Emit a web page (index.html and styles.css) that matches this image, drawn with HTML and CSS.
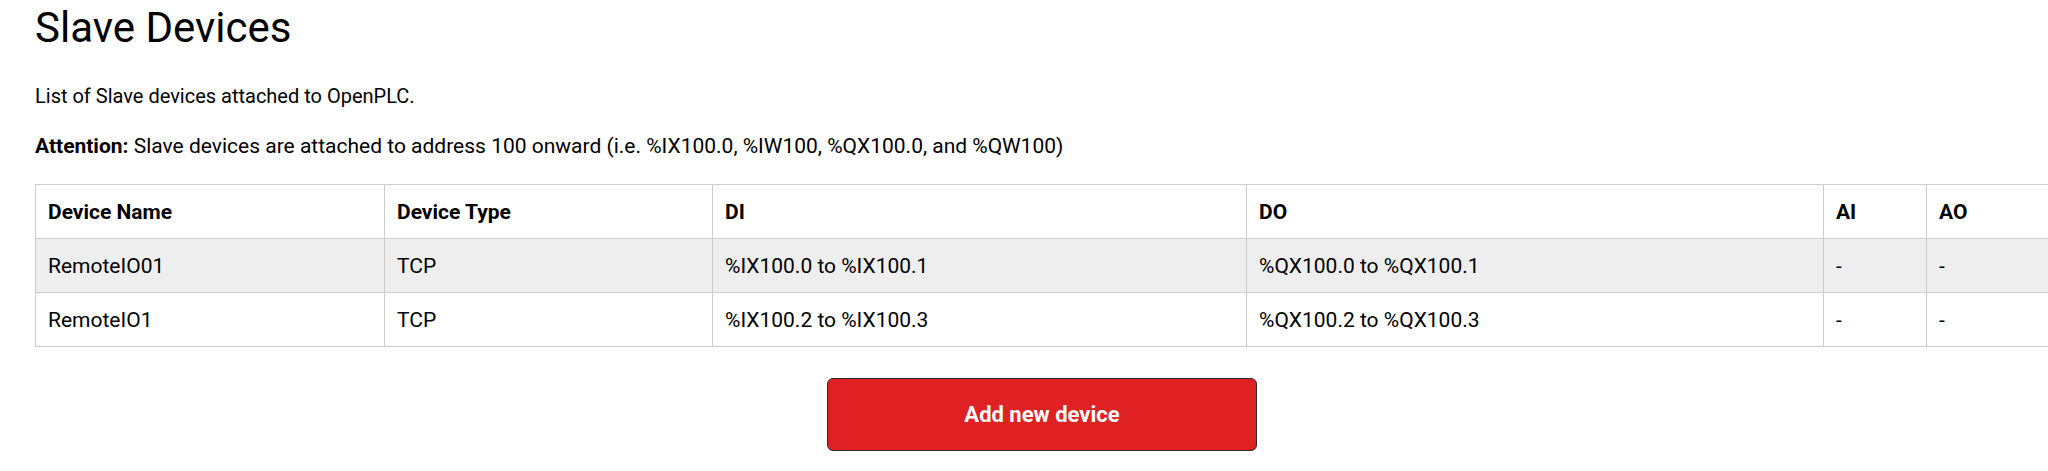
FILE: index.html
```html
<!DOCTYPE html>
<html lang="en">
<head>
<meta charset="utf-8">
<title>Slave Devices</title>
<link rel="stylesheet" href="styles.css">
</head>
<body>
<main class="content">
  <h1 class="title">Slave Devices</h1>
  <p class="lead">List of Slave devices attached to OpenPLC.</p>
  <p class="note"><strong>Attention:</strong> Slave devices are attached to address 100 onward (i.e. %IX100.0, %IW100, %QX100.0, and %QW100)</p>
  <table class="devices">
    <colgroup>
      <col class="c-name">
      <col class="c-type">
      <col class="c-di">
      <col class="c-do">
      <col class="c-ai">
      <col class="c-ao">
    </colgroup>
    <thead>
      <tr><th>Device Name</th><th>Device Type</th><th>DI</th><th>DO</th><th>AI</th><th>AO</th></tr>
    </thead>
    <tbody>
      <tr class="odd"><td>RemoteIO01</td><td>TCP</td><td>%IX100.0 to %IX100.1</td><td>%QX100.0 to %QX100.1</td><td>-</td><td>-</td></tr>
      <tr><td>RemoteIO1</td><td>TCP</td><td>%IX100.2 to %IX100.3</td><td>%QX100.2 to %QX100.3</td><td>-</td><td>-</td></tr>
    </tbody>
  </table>
  <div class="actions">
    <button class="btn-add" type="button">Add new device</button>
  </div>
</main>
</body>
</html>
```

FILE: styles.css
```css
html {
  overflow: hidden;
}
body {
  margin: 0;
  background: #fff;
  color: #000;
  font-family: Roboto, "Liberation Sans", Arial, sans-serif;
}
.content {
  width: 2014px;
  padding-left: 35px;
}
.title {
  margin: 3px 0 0;
  font-size: 42px;
  line-height: 50px;
  font-weight: 400;
}
.lead {
  margin: 30px 0 0;
  font-size: 20px;
  line-height: 26px;
}
.note {
  margin: 24px 0 0;
  font-size: 21px;
  line-height: 26px;
}
.devices {
  margin-top: 25px;
  width: 2014px;
  table-layout: fixed;
  border-collapse: collapse;
  font-size: 21px;
}
.c-name { width: 349px; }
.c-type { width: 328px; }
.c-di { width: 534px; }
.c-do { width: 577px; }
.c-ai { width: 103px; }
.c-ao { width: 123px; }
.devices th,
.devices td {
  border: 1px solid #ccc;
  height: 54px;
  padding: 0 12px;
  text-align: left;
  box-sizing: border-box;
}
.devices th {
  font-weight: 700;
}
.devices tr.odd td {
  background: #eee;
}
.actions {
  display: flex;
  justify-content: center;
  margin-top: 31px;
}
.btn-add {
  width: 430px;
  height: 73px;
  background: #e02124;
  color: #fff;
  border: 1px solid #2a2a2a;
  border-radius: 6px;
  font-family: Roboto, "Liberation Sans", Arial, sans-serif;
  font-size: 22px;
  font-weight: 700;
}
```
